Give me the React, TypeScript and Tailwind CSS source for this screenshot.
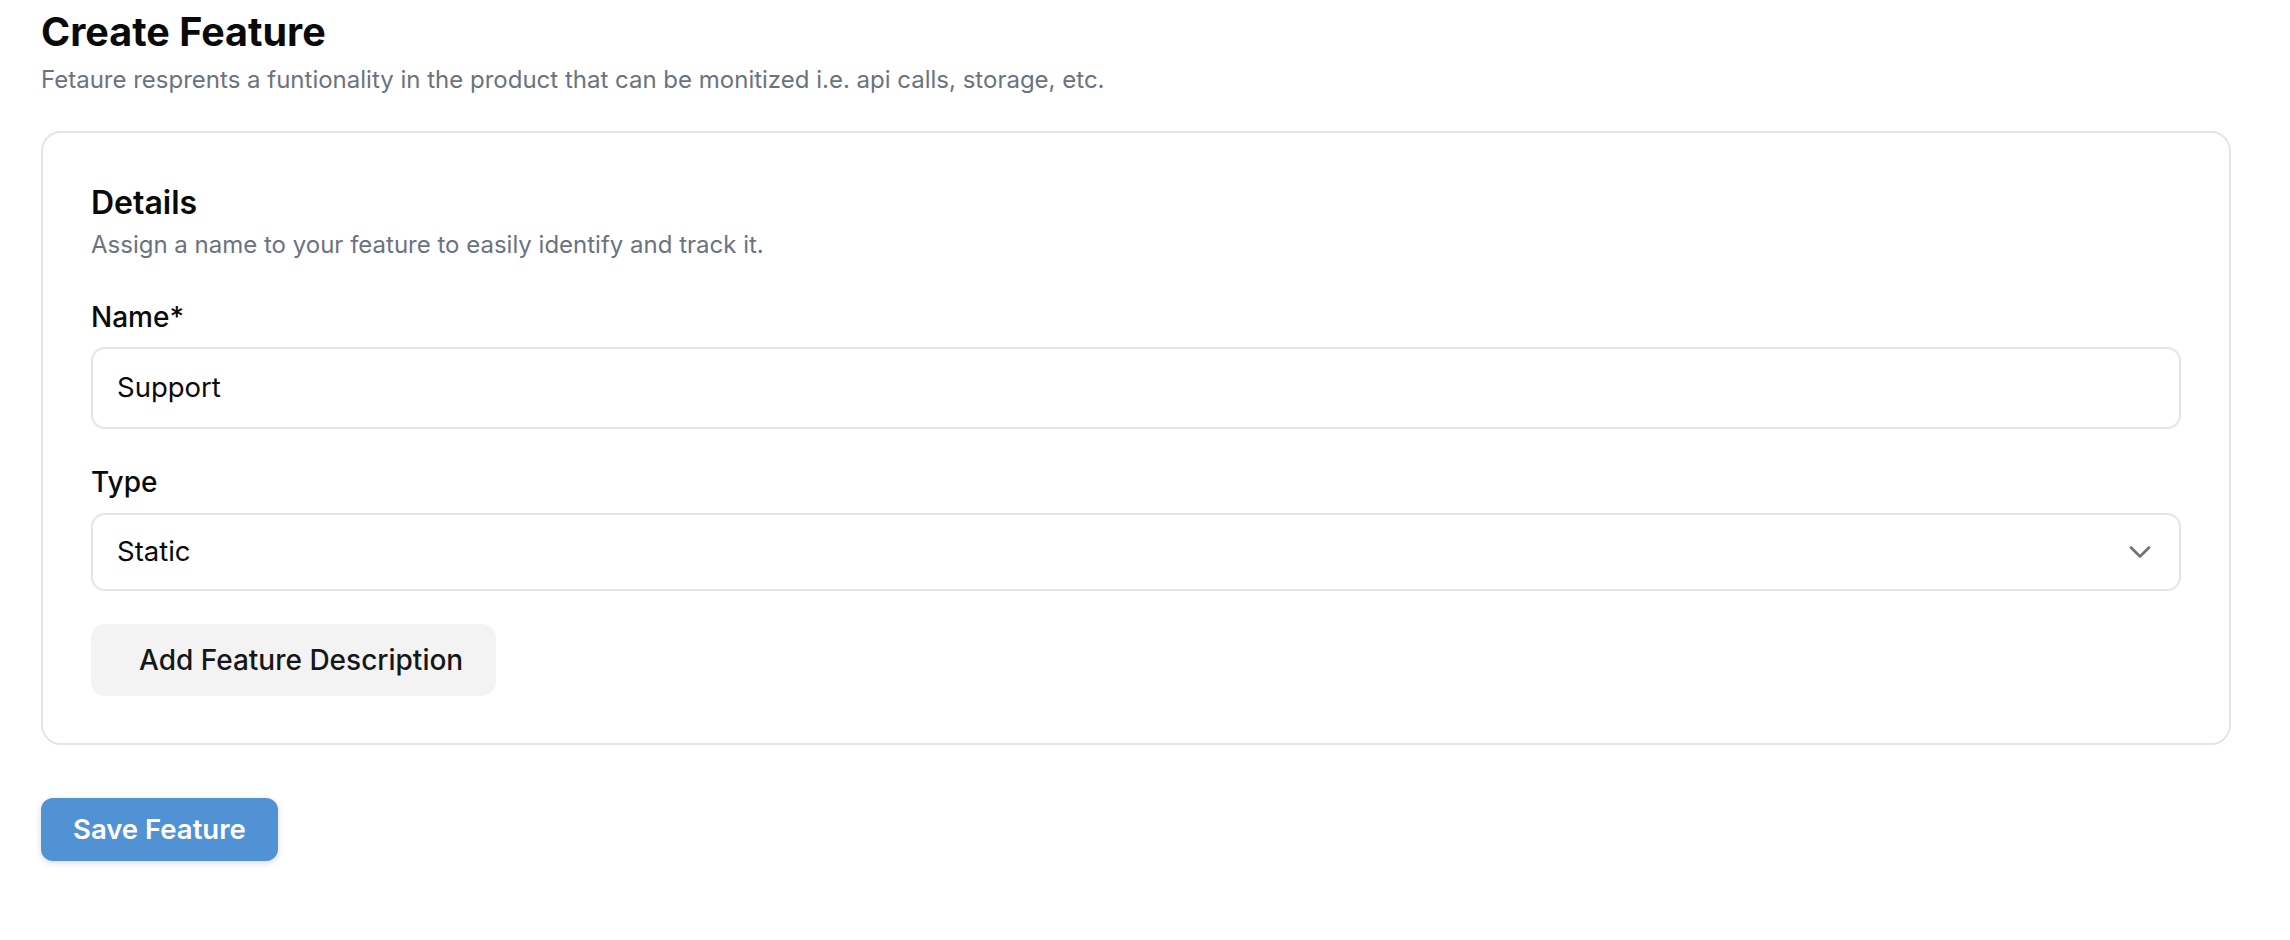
import React from "react";

function ChevronDown() {
  return (
    <svg width="36" height="36" viewBox="0 0 24 24" fill="none" stroke="#737373" strokeWidth="1.8" strokeLinecap="round" strokeLinejoin="round">
      <path d="m6 9 6 6 6-6" />
    </svg>
  );
}

export default function App() {
  return (
    <div className="min-h-screen bg-white" style={{ fontFamily: "Inter, 'Noto Sans', sans-serif" }}>
      <div className="pl-[41px] pt-[8px] w-[2231px] flex flex-col">
        <h1 className="text-[39.5px] leading-[48px] font-bold text-[#0a0a0a]">Create Feature</h1>
        <p className="mt-[8px] text-[24px] leading-[32px] text-[#6b7280]">
          Fetaure resprents a funtionality in the product that can be monitized i.e. api calls, storage, etc.
        </p>

        <div className="mt-[35px] border-2 border-[#e5e5e5] rounded-[20px] pt-[50px] pb-[47px] px-[48px] flex flex-col">
          <h2 className="text-[32px] leading-[40px] font-semibold text-[#0a0a0a]">Details</h2>
          <p className="mt-[6px] text-[24px] leading-[32px] text-[#6b7280]">
            Assign a name to your feature to easily identify and track it.
          </p>

          <label className="mt-[38px] text-[28px] leading-[36px] font-medium text-[#0a0a0a]">Name*</label>
          <div className="mt-[12px] h-[82px] border-2 border-[#e5e5e5] rounded-[14px] flex items-center px-[24px]">
            <span className="text-[27.5px] text-[#0a0a0a]">Support</span>
          </div>

          <label className="mt-[35px] text-[28px] leading-[36px] font-medium text-[#0a0a0a]">Type</label>
          <div className="mt-[13px] h-[78px] border-2 border-[#e5e5e5] rounded-[14px] flex items-center justify-between pl-[24px] pr-[21px]">
            <span className="text-[27.5px] text-[#0a0a0a]">Static</span>
            <ChevronDown />
          </div>

          <div className="mt-[33px] flex">
            <button className="h-[72px] bg-[#f3f3f3] rounded-[14px] pl-[48px] pr-[33px] text-[28px] font-medium text-[#171717]">
              Add Feature Description
            </button>
          </div>
        </div>

        <div className="mt-[53px] flex">
          <button className="h-[63px] bg-[#5192d4] rounded-[12px] px-[32px] text-[27.5px] font-semibold text-white shadow-[0_2px_6px_rgba(0,0,0,0.15)]">
            Save Feature
          </button>
        </div>
      </div>
    </div>
  );
}
